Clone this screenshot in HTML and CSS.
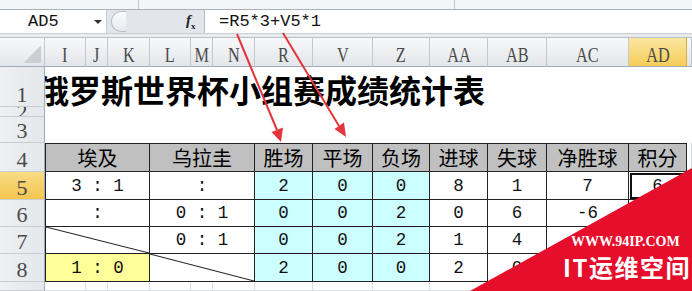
FILE: index.html
```html
<!DOCTYPE html>
<html lang="zh-CN">
<head>
    <meta charset="UTF-8">
    <title>小组赛成绩统计表</title>
    <link rel="stylesheet" href="styles.css">
</head>
<body>
    <div class="ribbon"><span class="ribbon-part first-part"></span><span class="ribbon-part second-part"></span></div>
    <div class="formula-bar">
        <div class="name-box"><span class="name">AD5</span><span class="drop"></span></div>
        <div class="fx-area"><span class="knob"></span><span class="fx"><i>f</i><sub>x</sub></span></div>
        <div class="formula">=R5*3+V5*1</div>
    </div>
    <div class="bar-gap"></div>

    <div class="sheet">
        <!-- column headers -->
        <div class="corner"><span class="corner-mark"></span></div>
        <div class="col"><span>I</span></div>
        <div class="col"><span>J</span></div>
        <div class="col"><span>K</span></div>
        <div class="col"><span>L</span></div>
        <div class="col"><span>M</span></div>
        <div class="col"><span>N</span></div>
        <div class="col"><span>R</span></div>
        <div class="col"><span>V</span></div>
        <div class="col"><span>Z</span></div>
        <div class="col"><span>AA</span></div>
        <div class="col"><span>AB</span></div>
        <div class="col"><span>AC</span></div>
        <div class="col col-sel"><span>AD</span></div>
        <div class="col"></div>

        <!-- title -->
        <div class="row-head">1</div>
        <div class="title">俄罗斯世界杯小组赛成绩统计表</div>
        <div class="row-head row-thin">2</div>
        <div class="row-head">3</div>

        <!-- table head -->
        <div class="row-head">4</div>
        <div class="cell th span3 first">埃及</div>
        <div class="cell th span3">乌拉圭</div>
        <div class="cell th">胜场</div>
        <div class="cell th">平场</div>
        <div class="cell th">负场</div>
        <div class="cell th">进球</div>
        <div class="cell th">失球</div>
        <div class="cell th">净胜球</div>
        <div class="cell th">积分</div>
        <div class="cell"></div>

        <div class="row-head row-sel">5</div>
        <div class="cell td span3 first">3 : 1</div>
        <div class="cell td span3">:</div>
        <div class="cell td cyan">2</div>
        <div class="cell td cyan">0</div>
        <div class="cell td cyan">0</div>
        <div class="cell td">8</div>
        <div class="cell td">1</div>
        <div class="cell td">7</div>
        <div class="cell td sel">6</div>
        <div class="cell"></div>

        <div class="row-head">6</div>
        <div class="cell td span3 first">:</div>
        <div class="cell td span3">0 : 1</div>
        <div class="cell td cyan">0</div>
        <div class="cell td cyan">0</div>
        <div class="cell td cyan">2</div>
        <div class="cell td">0</div>
        <div class="cell td">6</div>
        <div class="cell td">-6</div>
        <div class="cell td">0</div>
        <div class="cell"></div>

        <div class="row-head">7</div>
        <div class="cell td span3 first slash"></div>
        <div class="cell td span3">0 : 1</div>
        <div class="cell td cyan">0</div>
        <div class="cell td cyan">0</div>
        <div class="cell td cyan">2</div>
        <div class="cell td">1</div>
        <div class="cell td">4</div>
        <div class="cell td">-3</div>
        <div class="cell td">0</div>
        <div class="cell"></div>

        <div class="row-head">8</div>
        <div class="cell td span3 first yellow">1 : 0</div>
        <div class="cell td span3 slash"></div>
        <div class="cell td cyan">2</div>
        <div class="cell td cyan">0</div>
        <div class="cell td cyan">0</div>
        <div class="cell td">2</div>
        <div class="cell td">0</div>
        <div class="cell td">2</div>
        <div class="cell td">6</div>
        <div class="cell"></div>

        <div class="row-head"></div>
        <div class="cell"></div><div class="cell"></div><div class="cell"></div>
        <div class="cell"></div><div class="cell"></div><div class="cell"></div>
        <div class="cell"></div><div class="cell"></div><div class="cell"></div>
        <div class="cell"></div><div class="cell"></div><div class="cell"></div>
        <div class="cell"></div><div class="cell"></div>
    </div>

    <!-- red arrows and the corner stamp drawn over the sheet -->
    <svg class="marks" width="692" height="291" viewBox="0 0 692 291">
        <g stroke="#e3353b" stroke-width="2" fill="none">
            <line x1="237" y1="34" x2="277" y2="130"/>
            <line x1="283" y1="33" x2="339" y2="126"/>
        </g>
        <g fill="#e3353b">
            <polygon points="281,142 283,127.5 271.5,132"/>
            <polygon points="346,137 344,122.5 334.5,129"/>
        </g>
        <polygon points="470,291 692,168 692,291" fill="#e60f2b"/>
    </svg>
    <div class="stamp-url">WWW.94IP.COM</div>
    <div class="stamp-name">IT运维空间</div>
</body>
</html>
```

FILE: styles.css
```css
body {
    margin: 0;
    width: 692px;
    height: 291px;
    overflow: hidden;
    position: relative;
    background-color: white;
    font-family: "Liberation Serif", serif;
}

/* ribbon edge and formula bar */
.ribbon {
    display: flex;
    height: 9px;
    background-color: #f4f5f7;
    border-bottom: 1px solid #a9b0ba;
}
.ribbon-part {
    border-right: 1px solid #c3c8cf;
}
.first-part {
    width: 138px;
}
.second-part {
    width: 315px;
}
.formula-bar {
    display: flex;
    height: 23px;
    background-color: #e2e6eb;
}
.name-box {
    width: 106px;
    display: flex;
    align-items: center;
    background-color: white;
    border-right: 1px solid #c5cbd3;
}
.name {
    padding-left: 28px;
    font-family: "Liberation Mono", monospace;
    font-size: 17px;
    color: #111;
}
.drop {
    margin-left: 35px;
    width: 0;
    height: 0;
    border-left: 4px solid transparent;
    border-right: 4px solid transparent;
    border-top: 4px solid #333;
}
.fx-area {
    width: 97px;
    display: flex;
    align-items: center;
    border-right: 1px solid #b5bcc6;
}
.knob {
    margin-left: 4px;
    width: 14px;
    height: 19px;
    border: 1px solid #b8bec6;
    border-right: none;
    border-radius: 10px 0 0 10px;
    background: linear-gradient(#fbfbfc, #e6e9ed);
}
.fx {
    margin-left: 60px;
    font-family: "Liberation Serif", serif;
    font-weight: bold;
    font-size: 15px;
    color: #222;
}
.fx sub {
    font-size: 9px;
}
.formula {
    flex: 1;
    display: flex;
    align-items: center;
    padding-left: 14px;
    background-color: white;
    font-family: "Liberation Mono", monospace;
    font-size: 17px;
    color: #111;
}
.bar-gap {
    height: 3px;
    background-color: #e9ecef;
    border-top: 1px solid #c9ced5;
}

/* the sheet */
.sheet {
    display: grid;
    grid-template-columns: 45px 41px 22px 42px 41px 22px 42px 58px 60px 57px 58px 59px 82px 58px 1fr;
    grid-template-rows: 30px 40px 10px 26px 29px 28px 27px 27px 28px 9px;
}
.corner, .col {
    display: flex;
    align-items: center;
    justify-content: center;
    background: linear-gradient(#f7f8f9, #e3e6ea);
    border-top: 1px solid #b9c0c8;
    border-right: 1px solid #c2c8cf;
    border-bottom: 1px solid #9fabb8;
    font-size: 22px;
    color: #4a4a4a;
}
.col span {
    display: inline-block;
    padding-top: 5px;
    transform: scaleX(0.74);
}
.col-sel {
    background: linear-gradient(#fbe6a2, #f6cd58);
    border-right-color: #d8ae3e;
}
.corner {
    align-items: flex-end;
    justify-content: flex-end;
}
.corner-mark {
    width: 17px;
    height: 18px;
    margin: 0 3px 3px 0;
    background: linear-gradient(to bottom right, transparent 50%, #cbcfd4 50%);
}
.row-head {
    grid-column: 1;
    display: flex;
    align-items: flex-end;
    justify-content: center;
    overflow: hidden;
    background: linear-gradient(to right, #eef0f3, #e4e7eb);
    border-right: 1px solid #9fabb8;
    border-bottom: 1px solid #c9ced5;
    font-size: 22px;
    line-height: 1;
    color: #4a4a4a;
}
.row-thin {
    line-height: 9px;
}
.row-sel {
    background: linear-gradient(#f9dc86, #f3c54f);
}
.title {
    grid-column: 2 / -1;
    grid-row: span 3;
    overflow: hidden;
    white-space: nowrap;
    padding-top: 6px;
    text-indent: -8px;
    font-family: "Noto Sans CJK SC", sans-serif;
    font-weight: bold;
    font-size: 32px;
    line-height: 1;
    color: black;
}

.cell {
    display: flex;
    align-items: center;
    justify-content: center;
    overflow: hidden;
    white-space: pre;
    border-right: 1px solid #dadcdd;
    border-bottom: 1px solid #dadcdd;
    font-family: "Liberation Mono", monospace;
    font-size: 17.5px;
    color: #111;
}
.th {
    background-color: #c0c0c0;
    border-top: 1px solid #222;
    border-right-color: #222;
    border-bottom-color: #222;
    font-family: "Noto Sans CJK SC", sans-serif;
    font-size: 20px;
    color: black;
}
.td {
    border-right-color: #222;
    border-bottom-color: #222;
}
.first {
    border-left: 1px solid #222;
}
.span3 {
    grid-column: span 3;
}
.cyan {
    background-color: #ccffff;
}
.yellow {
    background-color: #ffff99;
}
.slash {
    background: linear-gradient(to top right, transparent calc(50% - 1px), #222 50%, transparent calc(50% + 1px));
}
.sel {
    outline: 2px solid #111;
    outline-offset: -3px;
}

/* overlay */
.marks {
    position: absolute;
    left: 0;
    top: 0;
}
.stamp-url {
    position: absolute;
    left: 571px;
    top: 234px;
    font-family: "Liberation Serif", serif;
    font-weight: bold;
    font-size: 14px;
    color: white;
    white-space: nowrap;
}
.stamp-name {
    position: absolute;
    left: 563px;
    top: 253px;
    font-family: "Noto Sans CJK SC", sans-serif;
    font-weight: bold;
    font-size: 24px;
    line-height: 1.2;
    letter-spacing: 1.5px;
    color: white;
    white-space: nowrap;
}
```
